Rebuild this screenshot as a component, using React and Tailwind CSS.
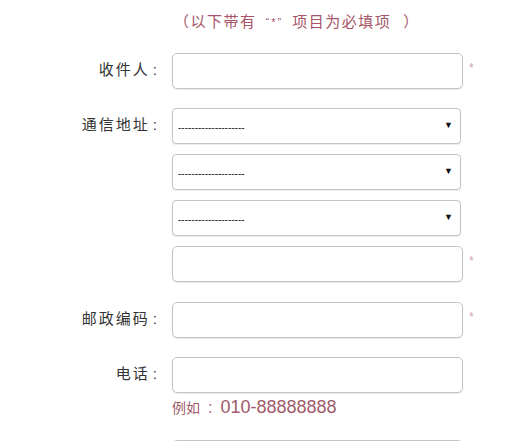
import React from "react";

const font = { fontFamily: '"Liberation Sans", "Noto Sans CJK SC", sans-serif' };

function Label({ children }) {
  return (
    <div className="flex h-[35px] w-[172px] shrink-0 items-center justify-end pr-[15px] text-[15px] tracking-[2px] text-[#333]">
      <span>{children}</span>
      <span className="ml-[3px] tracking-normal">:</span>
    </div>
  );
}

function Star() {
  return <span className="ml-[6px] mt-[9px] self-start text-[12px] leading-none text-[#d4a3ae]">*</span>;
}

function TextBox({ star }) {
  return (
    <div className="flex items-start">
      <div className="h-[36px] w-[291px] rounded-[5px] border border-[#c4c4c4] bg-white shadow-[0_1px_1px_rgba(0,0,0,0.08)]" />
      {star && <Star />}
    </div>
  );
}

function SelectBox() {
  return (
    <div className="flex h-[36px] w-[289px] items-center justify-between rounded-[4px] border border-[#c4c4c4] bg-white pl-[5px] pr-[7px] shadow-[0_1px_1px_rgba(0,0,0,0.08)]">
      <span className="mt-[2px] text-[10px] text-[#222]">--------------------</span>
      <span className="text-[9px] text-[#111]">▼</span>
    </div>
  );
}

export default function App() {
  return (
    <div className="h-[441px] w-[507px] overflow-hidden bg-white" style={font}>
      <div className="flex items-center pl-[174px] pt-[13px] text-[15px] leading-[18px] tracking-[1.5px] text-[#a65466]">
        <span>（以下带有</span>
        <span className="mx-[9px] text-[11px] tracking-[2px]">“*”</span>
        <span>项目为必填项</span>
        <span className="ml-[12px]">）</span>
      </div>

      <div className="mt-[22px] flex">
        <Label>收件人</Label>
        <TextBox star />
      </div>

      <div className="mt-[19px] flex">
        <Label>通信地址</Label>
        <div className="flex flex-col gap-[10px]">
          <SelectBox />
          <SelectBox />
          <SelectBox />
          <TextBox star />
        </div>
      </div>

      <div className="mt-[20px] flex">
        <Label>邮政编码</Label>
        <TextBox star />
      </div>

      <div className="mt-[19px] flex">
        <Label>电话</Label>
        <div className="flex flex-col">
          <TextBox />
          <div className="mt-[3px] flex items-baseline text-[#a05a68]">
            <span className="text-[14px]">例如</span>
            <span className="mx-[8px] text-[16px]">:</span>
            <span className="text-[18px] leading-[20px]">010-88888888</span>
          </div>
        </div>
      </div>

      <div className="mt-[20px] flex">
        <Label>手机</Label>
        <TextBox />
      </div>
    </div>
  );
}
